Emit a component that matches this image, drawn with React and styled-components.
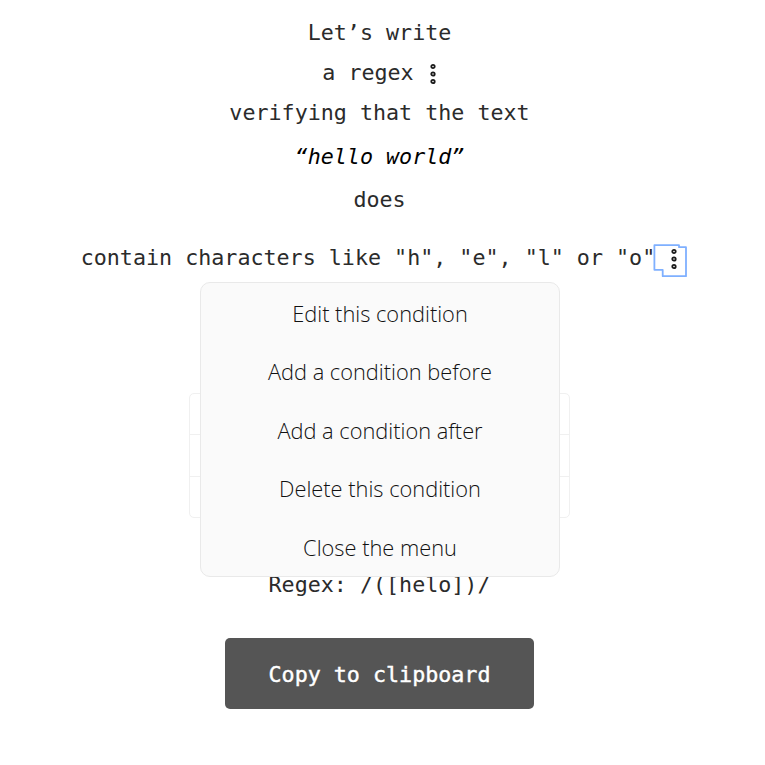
import React from "react";
import styled, { createGlobalStyle } from "styled-components";

const GlobalStyle = createGlobalStyle`
  html, body {
    margin: 0;
    padding: 0;
    background: #ffffff;
  }
`;

const Page = styled.div`
  width: 759px;
  min-height: 765px;
  padding-top: 13px;
  box-sizing: border-box;
  display: flex;
  flex-direction: column;
  align-items: center;
  font-family: "DejaVu Sans Mono", monospace;
  font-size: 21.7px;
  color: #2b2b2b;
`;

const Line = styled.div`
  height: 40px;
  line-height: 40px;
  margin-top: ${(p) => p.$gap || 0}px;
  white-space: pre;
  text-align: center;
`;

const Quote = styled.em`
  color: #000;
  font-style: italic;
`;

const Kebab = styled.span`
  position: relative;
  display: inline-block;
  width: 10px;
  height: 24px;
  vertical-align: middle;
`;

const Dots = styled.svg`
  position: absolute;
  left: 0;
  top: 0;
`;

const FocusRing = styled.svg`
  position: absolute;
  left: -15px;
  top: -7px;
`;

const Stage = styled.div`
  position: relative;
  width: 381px;
  margin-top: 115px;
`;

const Table = styled.div`
  border: 1px solid #f0f0f0;
  border-radius: 5px;
  box-sizing: border-box;
  display: flex;
  flex-direction: column;
`;

const Row = styled.div`
  height: ${(p) => p.$height}px;
  box-sizing: border-box;
  & + & {
    border-top: 1px solid #f0f0f0;
  }
`;

const Menu = styled.div`
  position: absolute;
  top: -111px;
  left: 11px;
  width: 360px;
  height: 295px;
  box-sizing: border-box;
  padding-top: 1.5px;
  background: #fafafa;
  border: 1px solid #e9e9e9;
  border-radius: 10px;
  overflow: hidden;
`;

const MenuItem = styled.div`
  height: 58.5px;
  line-height: 58.5px;
  text-align: center;
  font-family: "Open Sans", sans-serif;
  font-weight: 300;
  font-size: 21.8px;
  color: #111111;
`;

const CopyButton = styled.button`
  width: 309px;
  height: 71px;
  margin-top: 33px;
  border: none;
  border-radius: 5px;
  background: #555555;
  color: #ffffff;
  font-family: "DejaVu Sans Mono", monospace;
  font-size: 21.7px;
  font-weight: 400;
  -webkit-text-stroke: 0.4px #ffffff;
  padding: 2px 0 0;
`;

const KebabIcon = ({ focused }) => (
  <Kebab>
    {focused && (
      <FocusRing width="36" height="38" viewBox="0 0 36 38" fill="none">
        <path
          d="M1.4 5.2 H26 V7.2 H33 V36.2 H9.7 V29.8 H1.4 Z"
          stroke="#7fb0ff"
          strokeWidth="1.8"
          strokeLinejoin="round"
        />
      </FocusRing>
    )}
    <Dots width="10" height="24" viewBox="0 0 10 24" fill="none">
      <circle cx="6" cy="4.5" r="1.7" stroke="#1a1a1a" strokeWidth="1.8" />
      <circle cx="6" cy="12" r="1.7" stroke="#1a1a1a" strokeWidth="1.8" />
      <circle cx="6" cy="19.5" r="1.7" stroke="#1a1a1a" strokeWidth="1.8" />
    </Dots>
  </Kebab>
);

const menuItems = [
  "Edit this condition",
  "Add a condition before",
  "Add a condition after",
  "Delete this condition",
  "Close the menu",
];

export default function App() {
  return (
    <>
      <GlobalStyle />
      <Page>
        <Line>Let’s write</Line>
        <Line>
          a regex <KebabIcon />
        </Line>
        <Line>verifying that the text</Line>
        <Line $gap={4}>
          <Quote>“hello world”</Quote>
        </Line>
        <Line $gap={3}>does</Line>
        <Line $gap={18}>
          contain characters like "h", "e", "l" or "o" <KebabIcon focused />
        </Line>
        <Stage>
          <Table>
            <Row $height={40} />
            <Row $height={42} />
            <Row $height={41} />
          </Table>
          <Menu>
            {menuItems.map((item) => (
              <MenuItem key={item}>{item}</MenuItem>
            ))}
          </Menu>
        </Stage>
        <Line $gap={47}>Regex: /([helo])/</Line>
        <CopyButton>Copy to clipboard</CopyButton>
      </Page>
    </>
  );
}
